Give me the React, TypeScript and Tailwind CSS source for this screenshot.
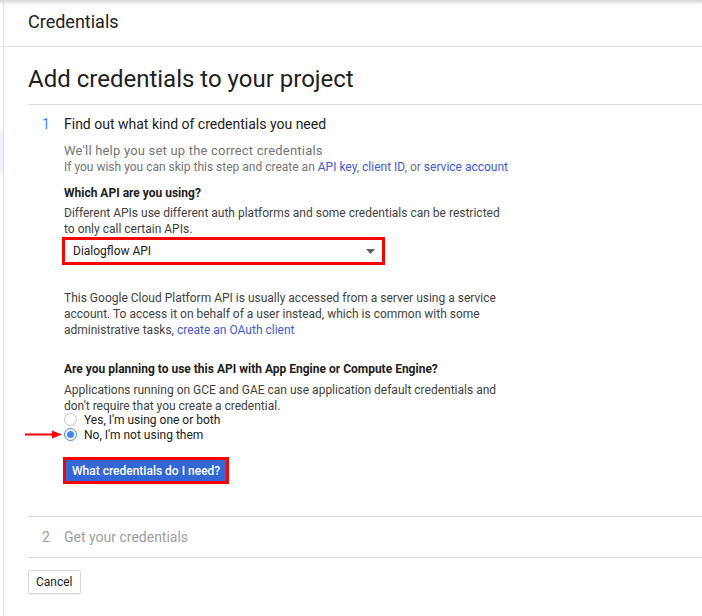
import React from "react";

function Radio({ checked }: { checked?: boolean }) {
  return (
    <span
      className={`flex h-[13px] w-[13px] shrink-0 items-center justify-center rounded-full border ${
        checked ? "border-[#4285f4]" : "border-[#c4c4c4]"
      } bg-white`}
    >
      {checked ? <span className="h-[7px] w-[7px] rounded-full bg-[#4285f4]" /> : null}
    </span>
  );
}

export default function App() {
  return (
    <div
      className="relative flex h-[616px] w-[702px] overflow-hidden bg-white text-[#212121]"
      style={{ fontFamily: "Roboto, 'Liberation Sans', sans-serif" }}
    >
      {/* top shadow */}
      <div className="pointer-events-none absolute left-0 right-0 top-0 h-[5px] bg-gradient-to-b from-[#d4d4d4] to-transparent" />

      {/* nav rail */}
      <aside className="flex w-[4px] shrink-0 flex-col border-r border-[#e0e0e0]">
        <div className="h-[47px] border-b border-[#e0e0e0]" />
        <div className="mt-[84px] h-[42px] bg-[#edf2fc]" />
      </aside>

      <main className="flex min-w-0 flex-1 flex-col">
        <header className="flex h-[47px] shrink-0 items-center border-b border-[#e0e0e0] px-6 pb-[2px]">
          <h1 className="text-[18px] leading-[22px] text-[#212121]">Credentials</h1>
        </header>

        <div className="pl-6">
          <h2 className="pb-[10px] pt-[17px] text-[24px] leading-[30px] text-[#212121]">
            Add credentials to your project
          </h2>
          <div className="border-t border-[#dadada]" />

          <section className="flex pt-[9px]">
            <span className="w-[36px] pl-[14px] text-[14px] leading-[20px] text-[#4285f4]">1</span>
            <div className="w-[446px] text-[12px] leading-[16px]">
              <h3 className="text-[14px] leading-[20px] text-[#212121]">Find out what kind of credentials you need</h3>
              <p className="mt-[9px] whitespace-nowrap text-[#757575]">
                <span className="text-[13px] tracking-[0.2px]">We&apos;ll help you set up the correct credentials</span>
                <br />
                If you wish you can skip this step and create an <a className="text-[#3d5bd4]">API key</a>,{" "}
                <a className="text-[#3d5bd4]">client ID</a>, or <a className="text-[#3d5bd4]">service account</a>
              </p>

              <p className="mt-[10px] font-bold text-[#212121]">Which API are you using?</p>
              <p className="mt-[4px] whitespace-nowrap text-[#424242]">
                Different APIs use different auth platforms and some credentials can be restricted
                <br />
                to only call certain APIs.
              </p>

              <div className="-ml-[2px] flex h-[28px] w-[323px] items-center justify-between border-[3px] border-[#ff0000] pl-[8px] pr-[7px]">
                <span className="text-[12px] text-[#212121]">Dialogflow API</span>
                <svg width="9" height="5" viewBox="0 0 9 5">
                  <path d="M0 0 L9 0 L4.5 5 Z" fill="#5f5f5f" />
                </svg>
              </div>

              <p className="mt-[25px] whitespace-nowrap text-[#424242]">
                This Google Cloud Platform API is usually accessed from a server using a service
                <br />
                account. To access it on behalf of a user instead, which is common with some
                <br />
                administrative tasks, <a className="text-[#3d5bd4]">create an OAuth client</a>
              </p>

              <p className="mt-[23px] font-bold text-[#212121]">
                Are you planning to use this API with App Engine or Compute Engine?
              </p>
              <p className="mt-[5px] whitespace-nowrap text-[#424242]">
                Applications running on GCE and GAE can use application default credentials and
                <br />
                don&apos;t require that you create a credential.
              </p>

              <div className="-mt-[2px] flex flex-col text-[#212121]">
                <label className="flex h-[15px] items-center gap-[7px]">
                  <Radio />
                  Yes, I&apos;m using one or both
                </label>
                <label className="relative flex h-[15px] items-center gap-[7px]">
                  <svg className="absolute left-[-39px] top-[3px]" width="38" height="9" viewBox="0 0 38 9">
                    <path d="M0 4.5 L28 4.5" stroke="#ff0000" strokeWidth="2" />
                    <path d="M27 0.5 L37 4.5 L27 8.5 Z" fill="#ff0000" />
                  </svg>
                  <Radio checked />
                  No, I&apos;m not using them
                </label>
              </div>

              <button className="-ml-[1px] mt-[15px] flex h-[27px] items-center border-[3px] border-[#ff0000] bg-[#3367d6] px-[6px] text-[12px] font-medium text-white">
                What credentials do I need?
              </button>
            </div>
          </section>

          <div className="mt-[32px] border-t border-[#dadada]" />
          <div className="flex h-[40px] items-center text-[14px] text-[#9e9e9e]">
            <span className="w-[36px] pl-[14px]">2</span>
            <span>Get your credentials</span>
          </div>
          <div className="border-t border-[#dadada]" />

          <button className="mt-[12px] h-[24px] rounded-[2px] border border-[#d6d6d6] px-[7px] text-[12px] text-[#212121] shadow-[0_1px_1px_rgba(0,0,0,0.06)]">
            Cancel
          </button>
        </div>
      </main>
    </div>
  );
}
